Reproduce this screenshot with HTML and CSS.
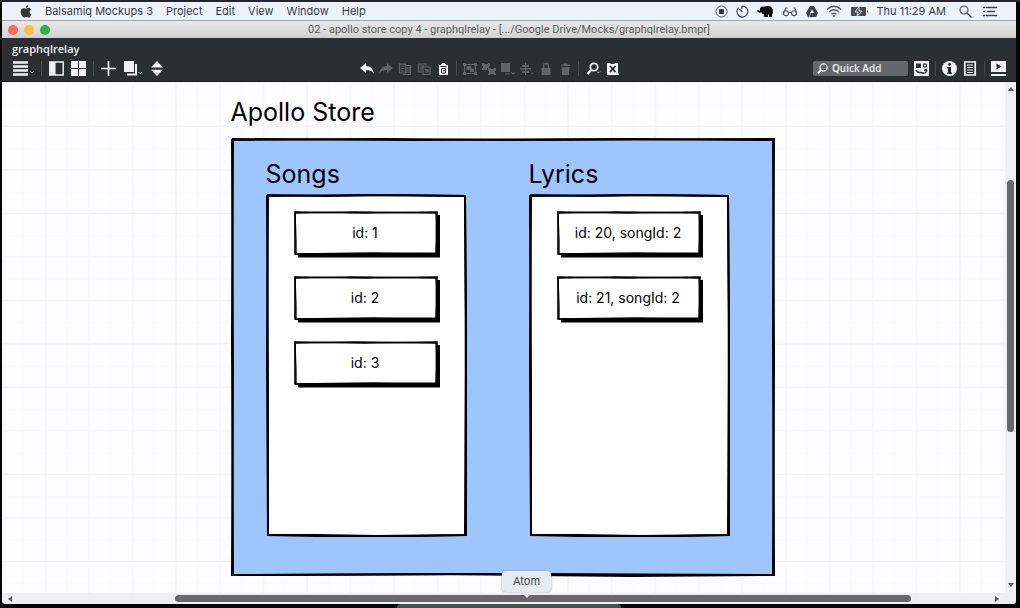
FILE: index.html
```html
<!DOCTYPE html>
<html lang="en">
<head>
<meta charset="utf-8">
<title>02 - apollo store copy 4 - graphqlrelay</title>
<link rel="stylesheet" href="styles.css">
</head>
<body>
<svg class="defs" aria-hidden="true">
  <symbol id="panel-sketch" viewBox="0 0 201 343" preserveAspectRatio="none">
    <path d="M2 2 L100 1 L199 2 L200 120 L199 341 L110 342 L50 341 L2 341 L1 170 Z" fill="#fff" stroke="#000" stroke-width="2"/>
    <path d="M1 1 L60 2 L130 1 L200 2 M199 1 L200 180 L200 342 M200 341 L100 343 L1 341 M2 342 L2 190 L1 1" fill="none" stroke="#000" stroke-width="2"/>
  </symbol>
  <symbol id="card-sketch" viewBox="0 0 146 47" preserveAspectRatio="none">
    <path d="M4 44.500 H144 V4" fill="none" stroke="#000" stroke-width="4"/>
    <path d="M1 1 L70 2 L143 1 L142 43 L80 42 L1 43 Z" fill="#fff" stroke="#000" stroke-width="1.600"/>
    <path d="M1 2 L60 1 L143 2 M142 1 L143 43 M1 43 L70 43 L143 42 M1 1 L2 30 L2 43" fill="none" stroke="#000" stroke-width="1.300"/>
  </symbol>
</svg>
<div class="desktop">
  <div class="screen">
    <nav class="menubar" aria-label="Menu bar">
      <button class="apple" aria-label="Apple menu"><svg width="12" height="13" viewBox="0 0 12 13"><path d="M8.3 0C8.4 1.4 7.1 2.9 5.8 2.9 5.7 1.5 7 .2 8.3 0ZM6 3.7c.7 0 1.300-.6 2.500-.6 1 0 1.900.5 2.500 1.300-2.100 1.300-1.700 4 .4 4.800C10.900 10.800 9.900 12.400 8.700 12.400 7.800 12.400 7.400 11.900 6.300 11.900 5.200 11.900 4.800 12.400 4 12.400 2.400 12.400.7 9.500.7 7.100.7 4.600 2.200 3.200 3.800 3.200c1 0 1.600.5 2.200.5Z" fill="#33363d"/></svg></button>
      <button>Balsamiq Mockups 3</button>
      <button>Project</button>
      <button>Edit</button>
      <button>View</button>
      <button>Window</button>
      <button>Help</button>
      <div class="status">
        <svg width="13" height="13" viewBox="0 0 13 13"><circle cx="6.500" cy="6.500" r="5.500" fill="none" stroke="#50535a"/><rect x="4" y="4" width="5" height="5" rx="1" fill="#33363d"/></svg>
        <svg width="13" height="13" viewBox="0 0 13 13"><path d="M5.800 1.100A5.500 5.500 0 1 1 2.600 2.600M6 1v3M6.500 7 3.500 4" fill="none" stroke="#41444b" stroke-width="1.200"/></svg>
        <svg width="17" height="13" viewBox="0 0 17 13"><path d="M5 5C5 2 8 1 11 1c4 0 5 3 5 7l-1 1v3h-3V9.500h-1V12H7V9C5 9 4.500 8 4.500 7 3.500 8 1 8 0 6l1-1c1 1 2 1 2 0Z" fill="#090a0d"/><circle cx="6" cy="4.500" r="3" fill="#090a0d"/></svg>
        <svg width="16" height="13" viewBox="0 0 16 13"><g fill="none" stroke="#50535a" stroke-width="1.100"><circle cx="4" cy="8.300" r="2.500"/><circle cx="12" cy="8.300" r="2.500"/><path d="M6.500 8q1.500-1 3 0M1.500 8 4 3l1.500 0M14.500 8 13 3l-1.500 0"/></g></svg>
        <svg width="12" height="13" viewBox="0 0 12 13"><path d="M4 1h4l4 7-2 4H2L0 8Z" fill="#3d4046"/><path d="m6 4.500 2 3.500H4Z" fill="#e9eef8"/><path d="M3 12l2-4" fill="none" stroke="#e9eef8" stroke-width=".6"/></svg>
        <svg width="16" height="13" viewBox="0 0 16 13"><g fill="none" stroke="#50535a" stroke-width="1.300"><path d="M1 4.500q7-6.500 14 0M3.200 7q4.800-4.500 9.600 0M5.500 9.300q2.500-2.300 5 0"/></g><path d="m6.500 10.500 1.500 1.700 1.500-1.700q-1.500-1-3 0" fill="#50535a"/></svg>
        <svg width="19" height="13" viewBox="0 0 19 13"><rect x="1" y="2" width="15" height="9" rx="1" fill="#464950"/><path d="M17 5q2 1.500 0 3Z" fill="#464950"/><path d="M9 1.500 5 7h3l-1 4.500L12 6H9Z" fill="#464950" stroke="#edf2fb" stroke-width=".9"/></svg>
        <span class="clock">Thu 11:29 AM</span>
        <svg width="13" height="13" viewBox="0 0 13 13"><circle cx="5" cy="5" r="4" fill="none" stroke="#50535a" stroke-width="1.200"/><path d="m8 8 4.500 4.500" stroke="#50535a" stroke-width="1.400"/></svg>
        <svg class="list" width="14" height="13" viewBox="0 0 14 13"><path d="M3 2.500h11M4 6.500h8M3 10.500h11M0 2.500h2M0 6.500h2M0 10.500h2" stroke="#41444b" stroke-width="1.500"/></svg>
      </div>
    </nav>

    <header class="titlebar">
      <div class="lights">
        <button class="light red" aria-label="Close"></button>
        <button class="light yellow" aria-label="Minimize"></button>
        <button class="light green" aria-label="Zoom window"></button>
      </div>
      <span class="title">02 - apollo store copy 4 - graphqlrelay - [.../Google Drive/Mocks/graphqlrelay.bmpr]</span>
    </header>

    <section class="appbar">
      <div class="project">graphqlrelay</div>
      <div class="tools">
        <div class="group wide">
          <button aria-label="Menu"><svg width="22" height="15" viewBox="0 0 22 15"><path d="M1 1.500h15M1 5.500h15M1 9.500h15M1 13.500h15" stroke="#f1f1f5" stroke-width="2.500"/><path d="m18 10 2 2 2-2" fill="none" stroke="#aaadb2"/></svg></button>
          <i class="sep"></i>
          <button aria-label="Navigator"><svg width="15" height="15" viewBox="0 0 15 15"><path d="M.8 1h13.400v13H.8Z" fill="none" stroke="#f1f1f5" stroke-width="1.500"/><path d="M1 1h5.500v13H1Z" fill="#f1f1f5"/></svg></button>
          <button aria-label="Grid"><svg width="15" height="15" viewBox="0 0 15 15"><path d="M0 0h7v7H0ZM8 0h7v7H8ZM0 8h7v7H0ZM8 8h7v7H8Z" fill="#f1f1f5"/></svg></button>
          <i class="sep"></i>
          <button aria-label="Add"><svg width="15" height="15" viewBox="0 0 15 15"><path d="M7.500 0v15M0 7.500h15" stroke="#f1f1f5" stroke-width="1.700"/></svg></button>
          <button aria-label="Duplicate"><svg width="20" height="15" viewBox="0 0 20 15"><path d="M1 0h10v11H1Z" fill="#f1f1f5"/><path d="M13 3v10.500H4" fill="none" stroke="#f1f1f5" stroke-width="2"/><path d="m15.500 11 1.700 1.700L19 11" fill="none" stroke="#aaadb2"/></svg></button>
          <button aria-label="Previous or next"><svg width="14" height="15" viewBox="0 0 14 15"><path d="M7 0 13 6.500H1ZM7 15 13 8.700H1Z" fill="#f1f1f5"/></svg></button>
        </div>

        <div class="group edit">
          <button aria-label="Undo"><svg width="14" height="14" viewBox="0 0 14 14"><path d="M0 6 6 1v3c5 0 7 3 8 8-2-3-4-4-8-4v3Z" fill="#f1f1f5"/></svg></button>
          <button aria-label="Redo" disabled><svg width="14" height="14" viewBox="0 0 14 14"><path d="M14 6 8 1v3C3 4 1 7 0 12c2-3 4-4 8-4v3Z" fill="#606368"/></svg></button>
          <button aria-label="Cut" disabled><svg width="14" height="14" viewBox="0 0 14 14"><path d="M1.500 2h6v9h-6ZM3 4h3M3 6.500h3M3 9h3M8 3.500h4.500v9H5M8 6h4M8 8h4M8 10h4" fill="none" stroke="#63666b" stroke-width="1.200"/></svg></button>
          <button aria-label="Copy" disabled><svg width="14" height="14" viewBox="0 0 14 14"><path d="M9 4V2H1.500v8H5M3 4h4M3 6h3M3 8h2M6 5h7v7.500H6ZM8 7l3 3M11 7v3H8" fill="none" stroke="#63666b" stroke-width="1.200"/></svg></button>
          <button aria-label="Paste"><svg width="14" height="14" viewBox="0 0 14 14"><path d="M5 2h1V1h3v1h1v1h2v10H3V3h2Z" fill="#f1f1f5"/><path d="M4.500 4.500h6M5.500 6.500h4v4.500h-4ZM7 8.700H9.500" fill="none" stroke="#2b2e33"/></svg></button>
          <i class="sep"></i>
          <button aria-label="Group" disabled><svg width="14" height="14" viewBox="0 0 14 14"><path d="M1.500 2.500h11v9h-11Z" fill="none" stroke="#606368" stroke-width="1.200"/><path d="M0 1h3v3H0ZM11 1h3v3h-3ZM0 10h3v3H0ZM11 10h3v3h-3ZM3.500 4H8v4H3.500ZM7 6.500h4V10H7Z" fill="#606368"/></svg></button>
          <button aria-label="Ungroup" disabled><svg width="14" height="14" viewBox="0 0 14 14"><path d="M0 1h2.500v1H6V1h2v3H7v2H5v2H0V6h1V4H0ZM6 6h2.500v1h3V6H14v3h-1v2h1v2h-2.500v-1h-3v1H6v-2h1V9H6Z" fill="#606368"/></svg></button>
          <button aria-label="Arrange" disabled><svg width="14" height="14" viewBox="0 0 14 14"><path d="M0 1h9v9H0Z" fill="#606368"/><path d="M4 12h5M10.500 10.500 12 12l1.500-1.500" fill="none" stroke="#606368" stroke-width="1.200"/></svg></button>
          <button aria-label="Align" disabled><svg width="14" height="14" viewBox="0 0 14 14"><path d="M2 3h7v2H2ZM0 6h11v1.500H0ZM2 9h7v2H2ZM5 1h1v12H5Z" fill="#606368"/><path d="m11 10.500 1.300 1.300 1.300-1.300" fill="none" stroke="#606368"/></svg></button>
          <button aria-label="Lock" disabled><svg width="14" height="14" viewBox="0 0 14 14"><path d="M2.500 6h9v7h-9Z" fill="#606368"/><path d="M4.500 6V4q0-2.500 2.500-2.500T9.500 4v2" fill="none" stroke="#606368" stroke-width="1.500"/></svg></button>
          <button aria-label="Delete" disabled><svg width="14" height="14" viewBox="0 0 14 14"><path d="M3.500 5h8l-.5 8H4ZM3 2.500h2.500v-1h4v1H12V4H3Z" fill="#606368"/></svg></button>
          <i class="sep"></i>
          <button aria-label="Zoom"><svg width="16" height="14" viewBox="0 0 16 14"><circle cx="9" cy="5" r="3.700" fill="none" stroke="#f1f1f5" stroke-width="1.800"/><path d="m6.500 7.500-4 4.500" stroke="#f1f1f5" stroke-width="2.400"/><path d="m12 9.500 1.500 1.500L15 9.500" fill="none" stroke="#aaadb2"/></svg></button>
          <button aria-label="Hide markup"><svg width="14" height="14" viewBox="0 0 14 14"><path d="M1 1h3l1 1h3l1-1h3v9l1 3H1Z" fill="#f1f1f5"/><path d="m4 4 5.500 6M9.500 4 4 10" stroke="#24272b" stroke-width="1.800"/></svg></button>
        </div>

        <div class="group right">
          <label class="quick">
            <svg width="11" height="11" viewBox="0 0 11 11"><circle cx="6.500" cy="4.500" r="3.600" fill="none" stroke="#f1f1f5" stroke-width="1.300"/><path d="M4 7 .8 10.300" stroke="#f1f1f5" stroke-width="1.800"/></svg>
            <input type="text" placeholder="Quick Add" aria-label="Quick Add">
          </label>
          <button aria-label="UI library"><svg width="15" height="15" viewBox="0 0 15 15"><path d="M0 0h15v15H0Z" fill="#f1f1f5"/><path d="M2 2.500h5v4.500H2Z" fill="#2b2e33"/><circle cx="11" cy="4.500" r="1.700" fill="none" stroke="#2b2e33" stroke-width="1.200"/><path d="M2 9q1 3 5 2.500 4 1.500 5.500-1V8.500L10 9.500" fill="none" stroke="#2b2e33" stroke-width="1.400"/></svg></button>
          <i class="sep"></i>
          <button aria-label="Inspector"><svg width="15" height="15" viewBox="0 0 15 15"><circle cx="7.500" cy="7.500" r="7.500" fill="#f1f1f5"/><circle cx="7.500" cy="3.300" r="1.500" fill="#24272b"/><path d="M5 6h4v5.500h1V13H5v-1.500h1v-4H5Z" fill="#24272b"/></svg></button>
          <button aria-label="Notes"><svg width="15" height="15" viewBox="0 0 15 15"><path d="M1.800 1h10.400v13H1.800Z" fill="none" stroke="#f1f1f5" stroke-width="1.700"/><path d="M4 4h6M4 6.500h6M4 9h6M4 11.500h6" stroke="#f1f1f5" stroke-width="1.200"/></svg></button>
          <i class="sep"></i>
          <button aria-label="Full screen presentation"><svg width="15" height="15" viewBox="0 0 15 15"><path d="M0 0h15v11H0ZM0 13h15v2H0Z" fill="#f1f1f5"/><path d="m5.500 2.500 5 3-5 3Z" fill="#24272b"/></svg></button>
        </div>
      </div>
    </section>

    <div class="work">
      <main class="canvas">
        <svg class="grid" aria-hidden="true">
          <defs><pattern id="grid" x="21.800" y="1.500" width="43.550" height="43.500" patternUnits="userSpaceOnUse">
            <path d="M0 21.800H44M43 0V44" stroke="#fafafb"/>
            <path d="M0 43H44M21.800 0V44" stroke="#f4f4f6" stroke-width="1.300"/>
          </pattern></defs>
          <rect width="100%" height="100%" fill="url(#grid)"/>
        </svg>
        <article class="mock">
          <h1>Apollo Store</h1>
          <div class="store">
            <svg class="outline" viewBox="0 0 544 439" preserveAspectRatio="none" aria-hidden="true">
              <path d="M2 2 L150 1 L290 2 L543 1 L542 200 L543 437 L300 436 L2 437 L1 200 Z" fill="#9fc5fe" stroke="#000" stroke-width="2"/>
              <path d="M1 1 L180 2 L400 1 L543 2 M542 1 L543 220 L542 438 M543 437 L400 438 L220 436 L1 437 M1 438 L2 230 L1 1" fill="none" stroke="#000" stroke-width="2"/>
            </svg>
            <section class="column">
              <h2>Songs</h2>
              <div class="panel">
                <svg class="outline"><use href="#panel-sketch"/></svg>
                <div class="card"><svg class="outline"><use href="#card-sketch"/></svg><span>id: 1</span></div>
                <div class="card"><svg class="outline"><use href="#card-sketch"/></svg><span>id: 2</span></div>
                <div class="card"><svg class="outline"><use href="#card-sketch"/></svg><span>id: 3</span></div>
              </div>
            </section>
            <section class="column">
              <h2>Lyrics</h2>
              <div class="panel">
                <svg class="outline"><use href="#panel-sketch"/></svg>
                <div class="card"><svg class="outline"><use href="#card-sketch"/></svg><span>id: 20, songId: 2</span></div>
                <div class="card"><svg class="outline"><use href="#card-sketch"/></svg><span>id: 21, songId: 2</span></div>
              </div>
            </section>
          </div>
        </article>
      </main>
      <div class="vscroll">
        <svg width="8" height="5" viewBox="0 0 8 5"><path d="m4 0 3 4H1Z" fill="#5c5c5e"/></svg>
        <div class="vtrack"><div class="vthumb"></div></div>
        <svg width="8" height="5" viewBox="0 0 8 5"><path d="m4 4 3-4H1Z" fill="#5c5c5e"/></svg>
      </div>
    </div>
    <div class="hscroll">
      <svg width="5" height="8" viewBox="0 0 5 8"><path d="m0 4 4-3v6Z" fill="#5c5c5e"/></svg>
      <div class="htrack"><div class="hthumb"></div></div>
      <svg width="5" height="8" viewBox="0 0 5 8"><path d="M4 4 0 1v6Z" fill="#5c5c5e"/></svg>
    </div>
  </div>
  <footer class="dockbar">
    <div class="dock"></div>
    <div class="tooltip" role="tooltip">Atom</div>
  </footer>
</div>
</body>
</html>
```
FILE: styles.css
```css
* { box-sizing: border-box; }
body { margin: 0; background: #08090b; font-family: Inter, "Liberation Sans", sans-serif; }
button { border: 0; padding: 0; background: none; font: inherit; color: inherit; }
svg { display: block; flex: none; }
.defs { position: absolute; width: 0; height: 0; }

.desktop { display: flex; flex-direction: column; min-height: 100vh; padding: 2px 4px 0 2px; background: linear-gradient(#22252f 2px, #050608 2px); }
.screen { flex: 1; display: flex; flex-direction: column; overflow: hidden; border-radius: 0 0 4px 4px; background: #efeff1; }

.menubar { display: flex; align-items: center; gap: 13px; height: 18px; padding: 0 19px 0 18px; background: #edf2fb; color: #3a3d45; font-size: 11px; line-height: 18px; white-space: nowrap; }
.status { display: flex; align-items: center; gap: 8px; margin-left: auto; }
.clock { padding-right: 5px; }
.list { margin-left: 3px; }

.titlebar { display: flex; align-items: center; height: 18px; padding: 0 6px; border-top: 1px solid #a5a6aa; background: linear-gradient(#e9e9e9, #d0d0d1); }
.lights { display: flex; flex: 1; gap: 6px; }
.light { width: 10px; height: 10px; border-radius: 50%; }
.red { background: #fb6a5c; }
.yellow { background: #fbbd43; }
.green { background: #2fb24c; }
.title { color: #5c5d60; font-family: Roboto, sans-serif; font-size: 11px; line-height: 16px; white-space: nowrap; }
.titlebar::after { content: ""; flex: 1; }

.appbar { padding: 3px 10px 5px; border-bottom: 1px solid #17181b; background: #2b2e33; color: #f1f1f5; font-family: "Open Sans", sans-serif; font-weight: 600; font-size: 11px; }
.project { line-height: 15px; }
.tools { display: flex; align-items: center; justify-content: space-between; height: 20px; padding-top: 5px; }
.group { display: flex; align-items: center; }
.wide { gap: 7px; }
.edit { gap: 5px; padding-left: 3px; }
.right { gap: 6px; }
.sep { width: 1px; height: 15px; background: #484b50; }
.edit .sep { margin: 0 1px; }
.quick { display: flex; align-items: center; gap: 4px; width: 95px; height: 15px; padding: 0 4px; border-radius: 2px; background: #65676c; }
.quick input { flex: 1; min-width: 0; padding: 0; border: 0; outline: 0; background: none; color: #f1f1f5; font: inherit; font-size: 10px; line-height: 15px; }
.quick input::placeholder { color: #f1f1f5; opacity: 1; }

.work { flex: 1; display: flex; background: #fdfcff; }
.canvas { position: relative; flex: 1; display: flex; justify-content: center; padding: 0 2px 16px 0; }
.grid { position: absolute; inset: 0; width: 100%; height: 100%; }
.mock { position: relative; display: flex; flex-direction: column; gap: 10px; padding-top: 14px; color: #000; }
h1, h2 { margin: 0; font-weight: 400; font-size: 25px; line-height: 32px; }
.store { position: relative; display: flex; gap: 62px; padding: 20px 45px 40px 35px; }
.outline { position: absolute; inset: 0; width: 100%; height: 100%; }
.column { position: relative; display: flex; flex-direction: column; gap: 4px; }
.panel { position: relative; display: flex; flex-direction: column; gap: 18px; min-height: 343px; padding: 17px 27px 0 28px; }
.card { position: relative; display: flex; align-items: center; justify-content: center; width: 146px; height: 47px; padding: 0 3px 3px 0; font-size: 14px; line-height: 20px; }
.card span { position: relative; }

.vscroll { display: flex; flex-direction: column; align-items: center; width: 11px; padding: 5px 0; background: #f0f0f2; }
.vtrack { flex: 1; padding: 0 2px; width: 11px; display: flex; flex-direction: column; }
.vtrack::before { content: ""; flex: 88; }
.vthumb { flex: 251; border-radius: 4px; background: #68686a; }
.vtrack::after { content: ""; flex: 151; }
.hscroll { display: flex; align-items: center; height: 11px; padding: 0 16px 0 6px; background: #efeff1; }
.htrack { flex: 1; display: flex; height: 7px; }
.htrack::before { content: ""; flex: 162; }
.hthumb { flex: 735; border-radius: 4px; background: #68686a; }
.htrack::after { content: ""; flex: 84; }

.dockbar { position: relative; display: flex; justify-content: center; height: 4px; }
.dock { width: 22%; border-radius: 4px 4px 0 0; background: #4b5051; }
.tooltip { position: absolute; left: 50%; bottom: 16px; margin-left: -7px; padding: 0 11px; border-radius: 4px; background: #e7eaf0; box-shadow: 0 0 2px #7d8796; color: #45484d; font-size: 11px; line-height: 21px; }
.tooltip::after { content: ""; position: absolute; top: 100%; left: 50%; margin-left: -6px; border: 6px solid transparent; border-top-color: #e7eaf0; border-bottom: 0; }
```
